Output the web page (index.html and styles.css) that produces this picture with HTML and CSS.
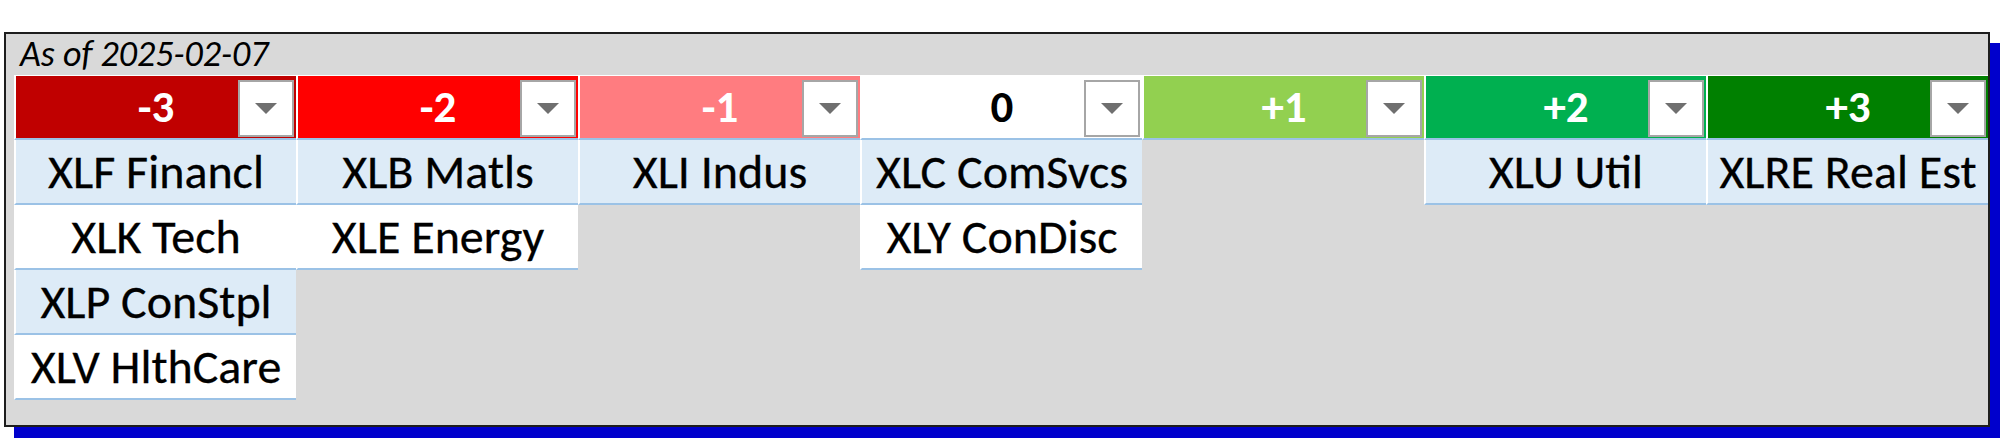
FILE: index.html
```html
<!DOCTYPE html>
<html>
<head>
<meta charset="utf-8">
<title>Sector board</title>
<link rel="stylesheet" href="styles.css">
</head>
<body>
<div class="frame">
  <div class="caption">As of 2025-02-07</div>
  <div class="board">
    <div class="col">
      <div class="head h-m3"><span class="num">-3</span><span class="drop"><svg width="22" height="11" viewBox="0 0 22 11"><polygon points="0,0 22,0 11,11"/></svg></span></div>
      <div class="item band">XLF Financl</div>
      <div class="item">XLK Tech</div>
      <div class="item band">XLP ConStpl</div>
      <div class="item">XLV HlthCare</div>
    </div>
    <div class="col">
      <div class="head h-m2"><span class="num">-2</span><span class="drop"><svg width="22" height="11" viewBox="0 0 22 11"><polygon points="0,0 22,0 11,11"/></svg></span></div>
      <div class="item band">XLB Matls</div>
      <div class="item">XLE Energy</div>
    </div>
    <div class="col">
      <div class="head h-m1"><span class="num">-1</span><span class="drop"><svg width="22" height="11" viewBox="0 0 22 11"><polygon points="0,0 22,0 11,11"/></svg></span></div>
      <div class="item band">XLI Indus</div>
    </div>
    <div class="col">
      <div class="head h-0"><span class="num">0</span><span class="drop"><svg width="22" height="11" viewBox="0 0 22 11"><polygon points="0,0 22,0 11,11"/></svg></span></div>
      <div class="item band">XLC ComSvcs</div>
      <div class="item">XLY ConDisc</div>
    </div>
    <div class="col">
      <div class="head h-p1"><span class="num">+1</span><span class="drop"><svg width="22" height="11" viewBox="0 0 22 11"><polygon points="0,0 22,0 11,11"/></svg></span></div>
    </div>
    <div class="col">
      <div class="head h-p2"><span class="num">+2</span><span class="drop"><svg width="22" height="11" viewBox="0 0 22 11"><polygon points="0,0 22,0 11,11"/></svg></span></div>
      <div class="item band">XLU Util</div>
    </div>
    <div class="col">
      <div class="head h-p3"><span class="num">+3</span><span class="drop"><svg width="22" height="11" viewBox="0 0 22 11"><polygon points="0,0 22,0 11,11"/></svg></span></div>
      <div class="item band">XLRE Real Est</div>
    </div>
  </div>
</div>
</body>
</html>
```
FILE: styles.css
```css
html, body {
  margin: 0;
  padding: 0;
}
body {
  width: 2000px;
  height: 438px;
  background: #ffffff;
  font-family: "Carlito", "Lato", "Liberation Sans", sans-serif;
  color: #000;
  overflow: hidden;
}
.frame {
  box-sizing: border-box;
  margin: 32px 0 0 4px;
  width: 1986px;
  height: 395px;
  border: 2px solid #1e1e1e;
  background: #d9d9d9;
  box-shadow: 10px 11px 0 #0000cc;
  padding-left: 8px;
}
.caption {
  height: 41px;
  line-height: 41px;
  font-size: 36px;
  font-style: italic;
  padding-left: 6px;
  white-space: nowrap;
}
.board {
  display: grid;
  grid-template-columns: repeat(7, 282px);
  align-items: start;
}
.col {
  display: flex;
  flex-direction: column;
}
.head {
  display: grid;
  grid-template-columns: 60px 1fr 60px;
  height: 62px;
  border-top: 1px solid #ffffff;
  border-left: 2px solid #ffffff;
  border-bottom: 2px solid #9bc2e6;
}
.num {
  grid-column: 2;
  text-align: center;
  font-weight: 700;
  font-size: 45px;
  line-height: 62px;
  color: #ffffff;
  white-space: nowrap;
}
.drop {
  grid-column: 3;
  justify-self: end;
  align-self: start;
  box-sizing: border-box;
  width: 56px;
  height: 57px;
  margin: 4px 2px 0 0;
  background: #ffffff;
  border: 2px solid #a6a6a6;
  display: flex;
  align-items: center;
  justify-content: center;
}
.drop svg {
  display: block;
  fill: #6f6f6f;
}
.h-m3 { background: #c00000; }
.h-m2 { background: #ff0000; }
.h-m1 { background: #ff7c80; }
.h-0 { background: #ffffff; }
.h-0 .num { color: #000000; }
.h-p1 { background: #92d050; }
.h-p2 { background: #00b050; }
.h-p3 { background: #008000; }
.item {
  height: 63px;
  line-height: 63px;
  text-align: center;
  font-size: 48px;
  background: #ffffff;
  border-left: 2px solid #ffffff;
  border-bottom: 2px solid #9bc2e6;
  white-space: nowrap;
  overflow: hidden;
  -webkit-text-stroke: 0.3px #000;
}
.item.band {
  background: #ddebf7;
}
```
